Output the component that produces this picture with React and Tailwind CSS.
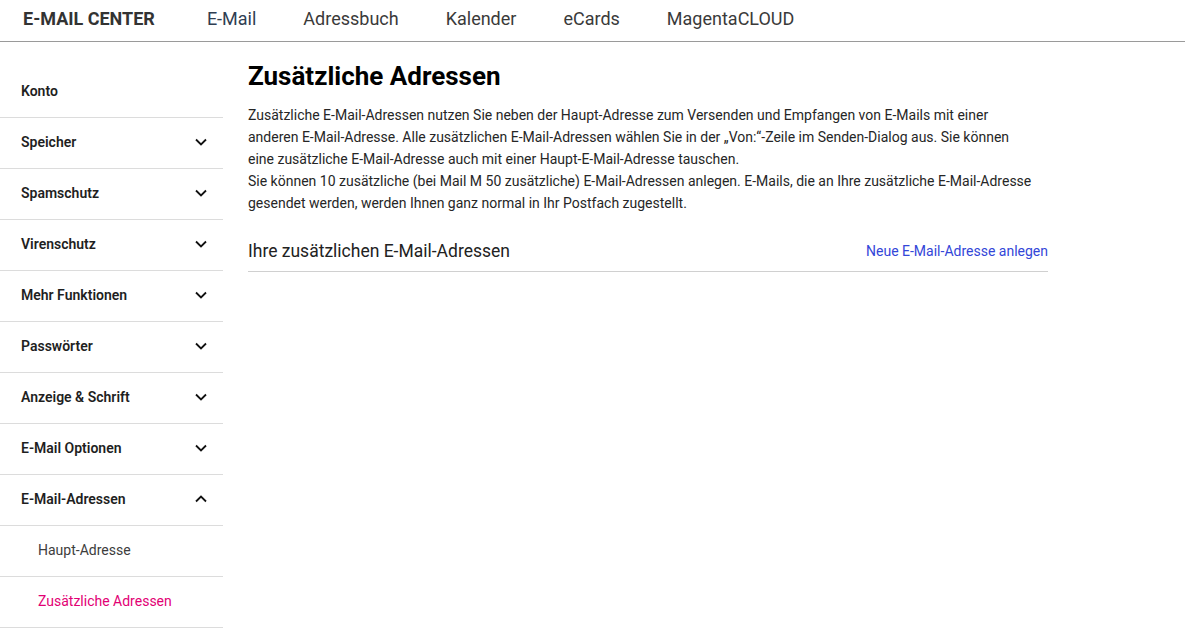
const navItems = ["E-Mail", "Adressbuch", "Kalender", "eCards", "MagentaCLOUD"];

const menu = [
  { label: "Konto" },
  { label: "Speicher", chevron: "down" },
  { label: "Spamschutz", chevron: "down" },
  { label: "Virenschutz", chevron: "down" },
  { label: "Mehr Funktionen", chevron: "down" },
  { label: "Passwörter", chevron: "down" },
  { label: "Anzeige & Schrift", chevron: "down" },
  { label: "E-Mail Optionen", chevron: "down" },
  { label: "E-Mail-Adressen", chevron: "up" },
];

const subMenu = [
  { label: "Haupt-Adresse" },
  { label: "Zusätzliche Adressen", active: true },
];

const Chevron = ({ up }) => (
  <svg width="12" height="8" viewBox="0 0 12 8" className={up ? "rotate-180" : ""}>
    <path d="M1 1.5l5 5 5-5" fill="none" stroke="#111" strokeWidth="1.8" />
  </svg>
);

const App = () => {
  return (
    <div
      className="min-h-screen bg-white text-[#262626]"
      style={{ fontFamily: "Roboto, 'Liberation Sans', sans-serif" }}
    >
      <header className="flex h-[42px] items-center border-b border-[#9a9a9a] pb-1 pl-[23px]">
        <span className="text-[18px] font-bold text-[#333]">E-MAIL CENTER</span>
        <nav className="ml-[52px] flex gap-[47px] text-[18px] text-[#3a3a3a]">
          {navItems.map((item) => (
            <a key={item} href="#" className={item === "E-Mail" ? "text-[#2f3e52]" : ""}>
              {item}
            </a>
          ))}
        </nav>
      </header>

      <div className="flex gap-[25px]">
        <aside className="w-[223px] shrink-0 pt-[25px]">
          {menu.map((item) => (
            <div
              key={item.label}
              className="flex h-[51px] items-center justify-between border-b border-[#dcdcdc] pb-0.5 pl-[21px] pr-4 text-[14px] font-semibold text-[#1f1f1f]"
            >
              <span>{item.label}</span>
              {item.chevron && <Chevron up={item.chevron === "up"} />}
            </div>
          ))}
          {subMenu.map((item) => (
            <div
              key={item.label}
              className={
                "flex h-[51px] items-center border-b border-[#dcdcdc] pb-0.5 pl-[38px] text-[14px] " +
                (item.active ? "text-[#e20074]" : "text-[#3d3d3d]")
              }
            >
              {item.label}
            </div>
          ))}
        </aside>

        <main className="w-[800px] pt-[18px]">
          <h1 className="text-[26px] font-bold leading-8 text-black">Zusätzliche Adressen</h1>
          <p className="mt-3 text-[14px] leading-[22px] text-[#262626]">
            Zusätzliche E-Mail-Adressen nutzen Sie neben der Haupt-Adresse zum Versenden und Empfangen von E-Mails mit einer
            <br />
            anderen E-Mail-Adresse. Alle zusätzlichen E-Mail-Adressen wählen Sie in der „Von:“-Zeile im Senden-Dialog aus. Sie können
            <br />
            eine zusätzliche E-Mail-Adresse auch mit einer Haupt-E-Mail-Adresse tauschen.
            <br />
            Sie können 10 zusätzliche (bei Mail M 50 zusätzliche) E-Mail-Adressen anlegen. E-Mails, die an Ihre zusätzliche E-Mail-Adresse
            <br />
            gesendet werden, werden Ihnen ganz normal in Ihr Postfach zugestellt.
          </p>
          <div className="mt-[17px] flex h-[41px] items-center justify-between border-b border-[#d0d0d0]">
            <span className="text-[17.5px] text-[#222]">Ihre zusätzlichen E-Mail-Adressen</span>
            <a href="#" className="text-[14px] text-[#3346d8]">
              Neue E-Mail-Adresse anlegen
            </a>
          </div>
        </main>
      </div>
    </div>
  );
};

export default App;
